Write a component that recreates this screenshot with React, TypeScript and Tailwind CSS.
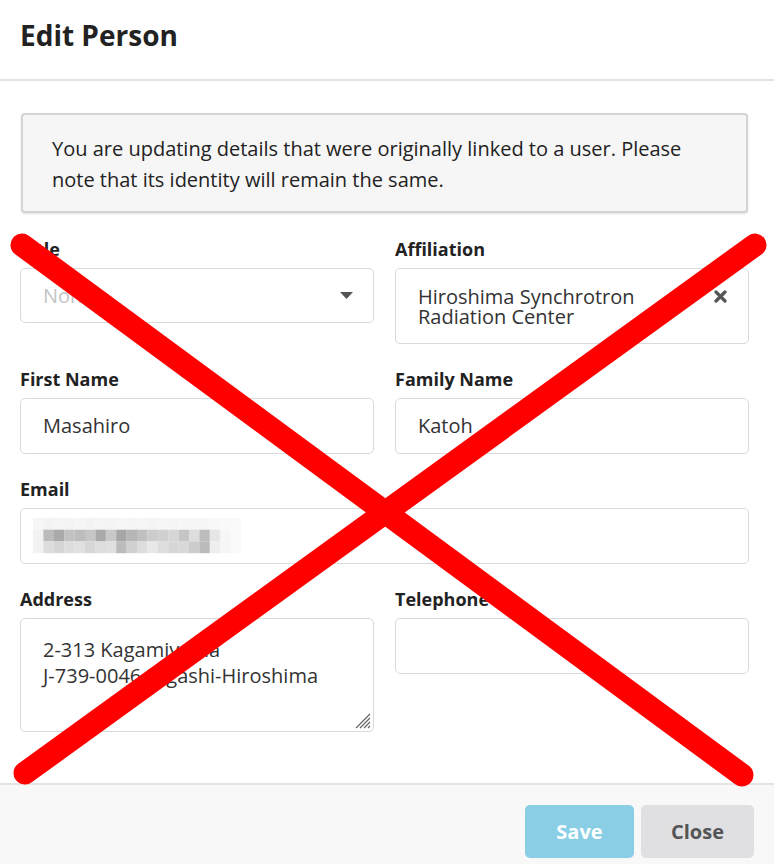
import { ReactNode } from "react";

const MOSAIC_ROWS = [
  ["#f6f6f6", "#f3f3f3", "#f5f5f5", "#f4f4f4", "#f6f6f6", "#f3f3f3", "#f5f5f5", "#f4f4f4", "#f6f6f6", "#f5f5f5", "#f6f6f6", "#f4f4f4", "#f6f6f6", "#f5f5f5", "#f7f7f7", "#f6f6f6", "#f7f7f7", "#f8f8f8", "#f9f9f9", "#fafafa"],
  ["#f2f2f2", "#bbbbbb", "#aaaaaa", "#c2c2c2", "#bdbdbd", "#c6c6c6", "#aaaaaa", "#c8c8c8", "#a6a6a6", "#b6b6b6", "#c0c0c0", "#cccccc", "#d0d0d0", "#d6d6d6", "#c5c5c5", "#dddddd", "#bdbdbd", "#e6e6e6", "#f6f6f6", "#fafafa"],
  ["#f2f2f2", "#dddddd", "#d6d6d6", "#dddddd", "#e0e0e0", "#d6d6d6", "#dddddd", "#e0e0e0", "#bbbbbb", "#d0d0d0", "#dddddd", "#e8e8e8", "#dddddd", "#d6d6d6", "#d8d8d8", "#cccccc", "#bbbbbb", "#eeeeee", "#f6f6f6", "#fafafa"],
];

function Field({ label, children }: { label: string; children: ReactNode }) {
  return (
    <div className="flex flex-col">
      <label className="text-[18px] leading-[22px] font-bold text-[#222] mb-2">
        {label}
      </label>
      {children}
    </div>
  );
}

const boxCls =
  "rounded-[5px] border border-[#dadada] bg-white text-[20px] text-[#333] pr-3";

export default function App() {
  return (
    <div
      className="relative w-[774px] h-[864px] bg-white overflow-hidden flex flex-col"
      style={{ fontFamily: "'Open Sans', Lato, sans-serif" }}
    >
      <header className="h-[81px] shrink-0 border-b-2 border-[#e4e4e4] px-5 pt-[17px]">
        <h1 className="text-[28px] leading-[36px] font-bold text-[#222]">
          Edit Person
        </h1>
      </header>

      <main className="flex-1 pl-5 pr-[25px] pt-[32px]">
        <div className="ml-px mr-px rounded-[4px] border-2 border-[#d4d4d4] bg-[#f6f6f6] shadow-[0_1px_2px_rgba(0,0,0,0.12)] pl-[29px] pr-[40px] pt-[18px] pb-[16px] text-[20px] leading-[31px] text-[#222]">
          You are updating details that were originally linked to a user. Please
          note that its identity will remain the same.
        </div>

        <div className="grid grid-cols-2 gap-x-[21px] gap-y-[24px] mt-[25px] items-start">
          <Field label="Title">
            <div className={`${boxCls} pl-[22px] h-[55px] flex items-center justify-between`}>
              <span className="text-[#c4c4c4]">None</span>
              <svg width="13" height="7" viewBox="0 0 13 7" className="mr-[8px]">
                <path d="M0 0h13L6.5 7z" fill="#555" />
              </svg>
            </div>
          </Field>
          <Field label="Affiliation">
            <div className={`${boxCls} pl-[22px] h-[76px] flex items-start justify-between pt-[18px]`}>
              <span className="leading-[20px] w-[250px]">
                Hiroshima Synchrotron Radiation Center
              </span>
              <svg width="13" height="13" viewBox="0 0 13 13" className="mt-[3px] mr-[9px]">
                <path d="M2 2l9 9M11 2l-9 9" stroke="#555" strokeWidth="3.2" strokeLinecap="round" />
              </svg>
            </div>
          </Field>

          <Field label="First Name">
            <div className={`${boxCls} pl-[22px] h-[56px] flex items-center`}>Masahiro</div>
          </Field>
          <Field label="Family Name">
            <div className={`${boxCls} pl-[22px] h-[56px] flex items-center`}>Katoh</div>
          </Field>

          <div className="col-span-2">
            <Field label="Email">
              <div className={`${boxCls} pl-[12px] h-[56px] flex items-center`}>
                <svg width="210" height="36" viewBox="0 0 210 36">
                  {MOSAIC_ROWS.map((row, r) =>
                    row.map((c, i) => (
                      <rect key={`${r}-${i}`} x={i * 10.4} y={r * 11.7} width="10.5" height="11.8" fill={c} />
                    ))
                  )}
                </svg>
              </div>
            </Field>
          </div>

          <Field label="Address">
            <div className={`${boxCls} pl-[22px] relative h-[114px] pt-[18px] leading-[26px]`}>
              <div>2-313 Kagamiyama</div>
              <div>J-739-0046 Higashi-Hiroshima</div>
              <svg width="18" height="18" viewBox="0 0 18 18" className="absolute right-[2px] bottom-[2px]">
                <path d="M17 3L3 17M17 7L7 17M17 11L11 17M17 15L15 17" stroke="#666" strokeWidth="1.2" />
              </svg>
            </div>
          </Field>
          <Field label="Telephone">
            <div className={`${boxCls} pl-[22px] h-[56px]`} />
          </Field>
        </div>
      </main>

      <footer className="h-[81px] shrink-0 border-t-2 border-[#e4e4e4] bg-[#f8f8f8] flex justify-end items-start gap-[7px] pr-5 pt-[20px]">
        <button className="w-[109px] h-[53px] rounded-[5px] bg-[#89cee5] text-white text-[20px] font-bold">
          Save
        </button>
        <button className="w-[113px] h-[53px] rounded-[5px] bg-[#e0e0e2] text-[#555] text-[20px] font-bold">
          Close
        </button>
      </footer>

      <svg
        className="absolute inset-0 pointer-events-none"
        width="774"
        height="864"
        viewBox="0 0 774 864"
      >
        <path d="M22 245L742 775M755 245L25 773" stroke="#ff0000" strokeWidth="23" strokeLinecap="round" />
      </svg>
    </div>
  );
}
